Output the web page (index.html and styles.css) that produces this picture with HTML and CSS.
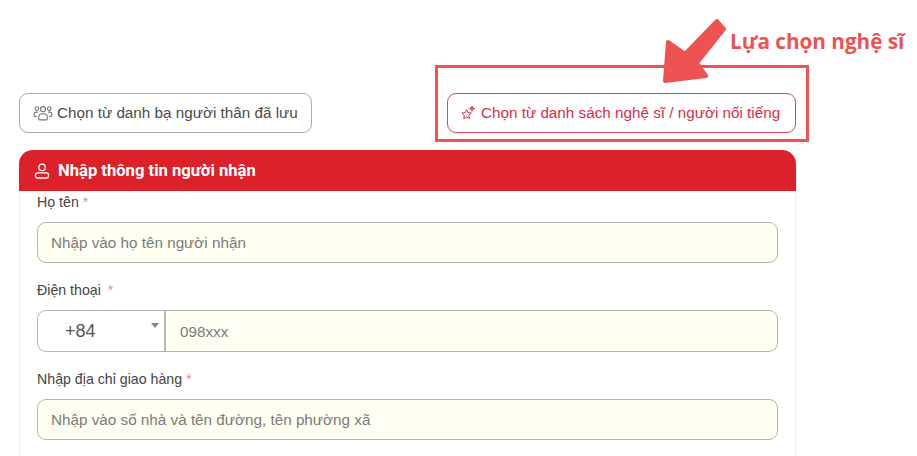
FILE: index.html
```html
<!DOCTYPE html>
<html lang="vi">
<head>
<meta charset="utf-8">
<title>Nhập thông tin người nhận</title>
<link rel="stylesheet" href="styles.css">
</head>
<body>
<div class="page">
  <div class="picker-row">
    <button class="pick pick-contacts" type="button">
      <svg class="ico" viewBox="0 0 18 16" width="20" height="18" fill="none" stroke="#777" stroke-width="1"><circle cx="9" cy="4.6" r="2.3"/><path d="M5.2 13.5v-1.8c0-1.7 1.3-3 3-3h1.6c1.7 0 3 1.3 3 3v1.8c0 .4-.3.7-.7.7H5.9c-.4 0-.7-.3-.7-.7z"/><circle cx="3.4" cy="4" r="1.6"/><circle cx="14.6" cy="4" r="1.6"/><path d="M3.4 11H1.8c-.5 0-.8-.3-.8-.8V9c0-1 .9-1.8 1.9-1.8h1.6M14.6 11h1.6c.5 0 .8-.3.8-.8V9c0-1-.9-1.8-1.9-1.8h-1.6"/></svg>
      Chọn từ danh bạ người thân đã lưu
    </button>
    <div class="callout">
      <button class="pick pick-artist" type="button">
        <svg class="ico" viewBox="0 0 16 16" width="16" height="16" fill="none" stroke="#dc2f48" stroke-width="1"><path d="M6.6 4.6l1.4 3 3.3.4-2.4 2.3.6 3.3-2.9-1.6-2.9 1.6.6-3.3L1.9 8l3.3-.4z" stroke-linejoin="round"/><path d="M12 1.5l.7 1.4 1.4.7-1.4.7-.7 1.4-.7-1.4-1.4-.7 1.4-.7zM14.5 7v.01" stroke-width="1.2"/></svg>
        Chọn từ danh sách nghệ sĩ / người nổi tiếng
      </button>
    </div>
    <svg class="arrow" viewBox="0 0 70 76" width="70" height="76"><path d="M58 5 65 13 38 47 47 60 6 65 9 26 26 38z" fill="#ee5253" stroke="#ee5253" stroke-width="4" stroke-linejoin="round"/></svg>
    <span class="callout-label">Lựa chọn nghệ sĩ</span>
  </div>

  <section class="card">
    <h2 class="card-head">
      <svg viewBox="0 0 16 16" width="16" height="16" fill="none" stroke="#fff" stroke-width="1.3"><circle cx="8" cy="4.4" r="3.2"/><rect x="1.5" y="9.8" width="13" height="5.2" rx="2.2"/></svg>
      Nhập thông tin người nhận
    </h2>
    <div class="card-body">
      <label class="field-label label-name">Họ tên <span class="req">*</span></label>
      <input class="input" type="text" placeholder="Nhập vào họ tên người nhận">

      <label class="field-label label-phone">Điện thoại <span class="req req-gap">*</span></label>
      <div class="phone">
        <div class="code">+84<span class="caret"></span></div>
        <input class="input phone-input" type="text" placeholder="098xxx">
      </div>

      <label class="field-label label-address">Nhập địa chỉ giao hàng <span class="req">*</span></label>
      <input class="input" type="text" placeholder="Nhập vào số nhà và tên đường, tên phường xã">
    </div>
  </section>
</div>
</body>
</html>
```
FILE: styles.css
```css
* { box-sizing: border-box; }
html, body { margin: 0; height: 100%; overflow: hidden; background: #fff; }
body { font-family: "Liberation Sans", Arial, sans-serif; color: #444; }

.page { width: 917px; height: 456px; padding: 65px 0 0 19px; overflow: hidden; }

.picker-row { position: relative; display: flex; align-items: flex-end; width: 790px; height: 77px; }

.pick {
  display: flex; align-items: center; height: 40px; padding: 0;
  background: #fff; border-radius: 9px; font: 15.25px/1 "Liberation Sans", Arial, sans-serif;
  white-space: nowrap;
}
.pick-contacts { width: 293px; margin-bottom: 9px; padding-left: 13px; gap: 4px; color: #4b4b4b; border: 1.5px solid #a9a9a9; }
.callout { width: 374px; height: 77px; margin-left: 123px; padding: 25px 0 0 9px; border: 3px solid #ee5253; }
.pick-artist { width: 349px; padding-left: 12px; gap: 5px; color: #d92d47; border: 1.5px solid #e0455b; }
.ico { flex: none; }

.arrow { position: absolute; left: 640px; top: -49px; }
.callout-label { position: absolute; left: 711px; top: -36px; font: 700 20.7px/24px "Open Sans", sans-serif; color: #ee5253; white-space: nowrap; }

.card { width: 777px; height: 400px; margin-top: 8px; border: 1px solid #f1f1f1; border-radius: 14px 14px 0 0; }
.card-head {
  display: flex; align-items: center; gap: 8px; height: 41px; margin: -1px -1px 0; padding: 1px 0 0 15px;
  background: #dc2128; color: #fff; border-radius: 14px 14px 0 0;
  font: 700 16.6px/1 "Roboto", "Liberation Sans", sans-serif;
}
.card-body { display: flex; flex-direction: column; padding: 0 17px; }

.field-label { display: block; height: 20px; font-size: 14.2px; line-height: 20px; color: #444; }
.label-name { margin-top: 1px; margin-bottom: 10px; }
.label-phone { margin-top: 17px; margin-bottom: 10px; }
.label-address { margin-top: 17px; margin-bottom: 10px; }
.req { color: #ee8a92; }
.req-gap { margin-left: 3px; }

.input {
  display: block; width: 741px; height: 41px; padding: 0 13px;
  background: #fffff2; border: 1.5px solid #b5b5ae; border-radius: 9px;
  font: 15.25px "Liberation Sans", Arial, sans-serif; color: #444; outline: none;
}
.input::placeholder { color: #7b7b7b; opacity: 1; }

.phone { display: flex; width: 741px; height: 42px; }
.code {
  position: relative; flex: none; width: 129px; padding-left: 27px;
  border: 1.5px solid #b5b5b5; border-right: 2px solid #b5b5b5; border-radius: 9px 0 0 9px;
  font-size: 18px; line-height: 40px; color: #555; background: #fff;
}
.caret { position: absolute; right: 5px; top: 12px; border: 4px solid transparent; border-top: 5px solid #888; border-bottom: 0; }
.phone-input { flex: 1; width: auto; height: 42px; padding-left: 14px; border-left: 0; border-radius: 0 9px 9px 0; }
```
